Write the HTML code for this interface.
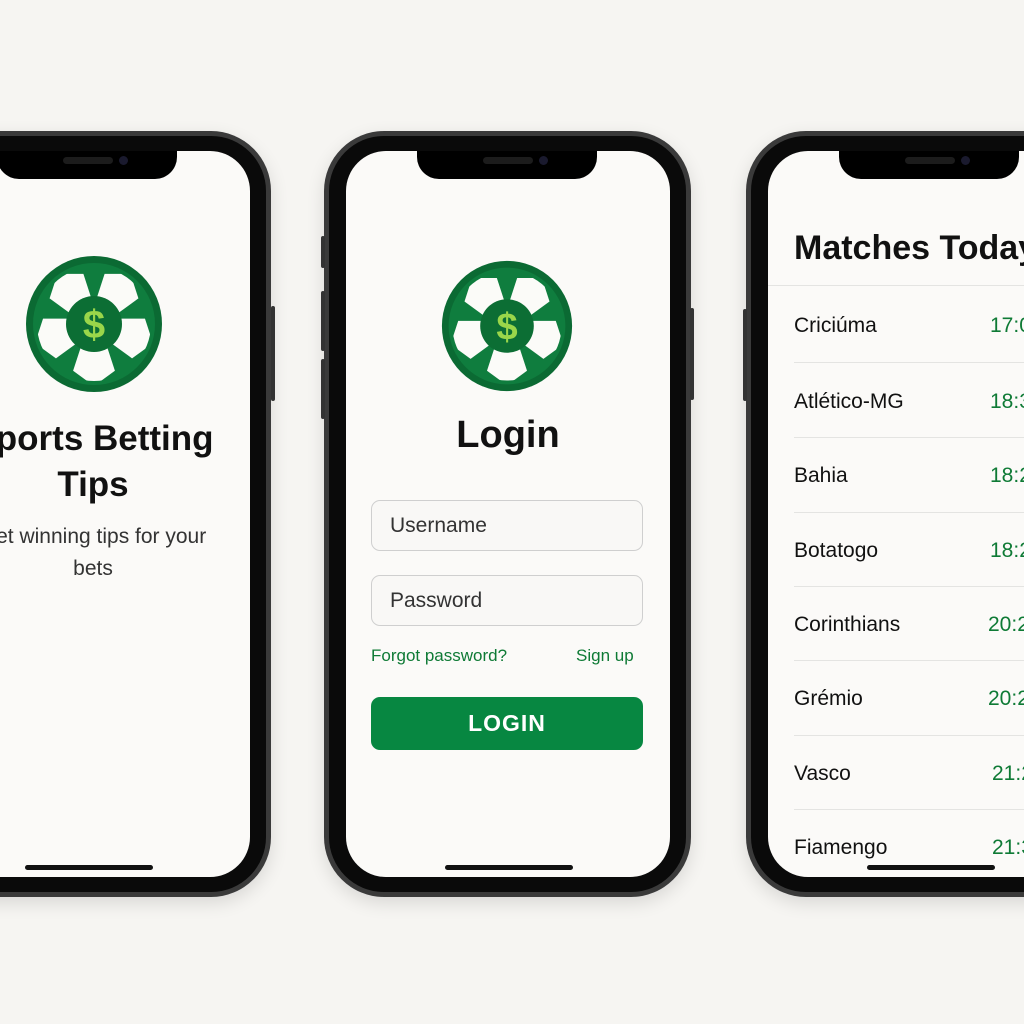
<!DOCTYPE html>
<html><head><meta charset="utf-8"><style>
*{margin:0;padding:0;box-sizing:border-box}
body{width:1024px;height:1024px;background:#f6f5f2;position:relative;overflow:hidden;font-family:"Liberation Sans",sans-serif}
.phone{position:absolute;top:131px;width:367px;height:766px;border-radius:60px;background:#3a3a3a;box-shadow:0 6px 18px rgba(0,0,0,.12);}
.phone .bz{position:absolute;left:5px;top:5px;right:5px;bottom:5px;border-radius:55px;background:#0a0a0a}
.phone .sc{position:absolute;left:22px;top:20px;right:21px;bottom:20px;border-radius:40px;background:#fbfaf8;overflow:hidden}
.notch{position:absolute;left:71px;top:0;width:180px;height:28px;background:#000;border-radius:0 0 22px 22px}
.notch i{position:absolute;left:66px;top:6px;width:50px;height:7px;border-radius:4px;background:#1c1c1c}
.notch b{position:absolute;left:122px;top:5px;width:9px;height:9px;border-radius:50%;background:#1a1a2e}
.home{position:absolute;left:99px;bottom:7px;width:128px;height:5px;border-radius:3px;background:#111}
.btn{position:absolute;width:4px;background:#333;border-radius:2px}
.t{position:absolute;text-align:center;color:#111}
.inp{position:absolute;left:25px;width:272px;height:51px;border:1px solid #cfcfcf;border-radius:9px;background:#f9f8f6;font-size:21px;color:#333;padding:13px 18px}
.row{position:absolute;left:26px;font-size:21px;color:#111}
.tm{position:absolute;left:222px;font-size:21px;color:#0e7a35}
.ln{position:absolute;left:26px;right:0;height:1px;background:#e4e4e2}
</style></head><body>
<svg width="0" height="0" style="position:absolute"><defs>
<clipPath id="cp"><circle cx="0" cy="0" r="57"/></clipPath>
<polygon id="pt" points="0,62 -20.9,46.8 -12.9,22.2 12.9,22.2 20.9,46.8"/>
<g id="logo">
<circle cx="0" cy="0" r="68" fill="#0b6a33"/>
<circle cx="0" cy="0" r="61" fill="#0f7d3e"/>
<g clip-path="url(#cp)" fill="#fbfbf8">
<use href="#pt" transform="rotate(0)"/>
<use href="#pt" transform="rotate(72)"/>
<use href="#pt" transform="rotate(144)"/>
<use href="#pt" transform="rotate(216)"/>
<use href="#pt" transform="rotate(288)"/>
</g>
<circle cx="0" cy="0" r="28" fill="#0c6e34"/>
<text x="0" y="14" text-anchor="middle" font-family="Liberation Sans" font-weight="bold" font-size="40" fill="#9ad64a">$</text>
</g></defs></svg>

<!-- left phone -->
<div class="phone" style="left:-96px">
<div class="btn" style="right:-4px;top:175px;height:95px"></div>
<div class="bz"></div>
<div class="sc">
<div class="notch"><i></i><b></b></div>
<svg style="position:absolute;left:98px;top:103px" width="140" height="140" viewBox="-70 -70 140 140"><use href="#logo"/></svg>
<div class="t" style="left:-33px;width:400px;top:265px;font-size:35px;font-weight:bold;line-height:46px">Sports Betting<br>Tips</div>
<div class="t" style="left:-33px;width:400px;top:370px;font-size:21px;line-height:32px;color:#333">Get winning tips for your<br>bets</div>
<div class="home"></div>
</div></div>

<!-- middle phone -->
<div class="phone" style="left:324px">
<div class="btn" style="left:-3px;top:105px;height:32px"></div>
<div class="btn" style="left:-3px;top:160px;height:60px"></div>
<div class="btn" style="left:-3px;top:228px;height:60px"></div>
<div class="btn" style="right:-3px;top:177px;height:92px"></div>
<div class="bz"></div>
<div class="sc">
<div class="notch"><i></i><b></b></div>
<svg style="position:absolute;left:94px;top:108px" width="134" height="134" viewBox="-70 -70 140 140"><use href="#logo"/></svg>
<div class="t" style="left:0;width:324px;top:263px;font-size:38px;font-weight:bold">Login</div>
<div class="inp" style="top:349px">Username</div>
<div class="inp" style="top:424px">Password</div>
<div style="position:absolute;left:25px;top:495px;font-size:17px;color:#0e7a35">Forgot password?</div>
<div style="position:absolute;left:230px;top:495px;font-size:17px;color:#0e7a35">Sign up</div>
<div style="position:absolute;left:25px;top:546px;width:272px;height:53px;border-radius:9px;background:#078741;color:#fff;font-weight:bold;font-size:23px;text-align:center;line-height:53px;letter-spacing:1px">LOGIN</div>
<div class="home"></div>
</div></div>

<!-- right phone -->
<div class="phone" style="left:746px">
<div class="btn" style="left:-3px;top:178px;height:92px"></div>
<div class="bz"></div>
<div class="sc">
<div class="notch"><i></i><b></b></div>
<div style="position:absolute;left:26px;top:78px;font-size:34px;font-weight:bold;color:#111;white-space:nowrap">Matches Today</div>
<div class="ln" style="top:134px;left:0"></div>
<div class="row" style="top:163px">Criciúma</div><div class="tm" style="top:163px">17:00</div>
<div class="ln" style="top:211px"></div>
<div class="row" style="top:239px">Atlético-MG</div><div class="tm" style="top:239px">18:30</div>
<div class="ln" style="top:286px"></div>
<div class="row" style="top:313px">Bahia</div><div class="tm" style="top:313px">18:20</div>
<div class="ln" style="top:361px"></div>
<div class="row" style="top:388px">Botatogo</div><div class="tm" style="top:388px">18:20</div>
<div class="ln" style="top:435px"></div>
<div class="row" style="top:462px">Corinthians</div><div class="tm" style="top:462px;left:220px">20:20</div>
<div class="ln" style="top:509px"></div>
<div class="row" style="top:536px">Grémio</div><div class="tm" style="top:536px;left:220px">20:20</div>
<div class="ln" style="top:584px"></div>
<div class="row" style="top:611px">Vasco</div><div class="tm" style="top:611px;left:224px">21:20</div>
<div class="ln" style="top:658px"></div>
<div class="row" style="top:685px">Fiamengo</div><div class="tm" style="top:685px;left:224px">21:30</div>
<div class="home"></div>
</div></div>
</body></html>
